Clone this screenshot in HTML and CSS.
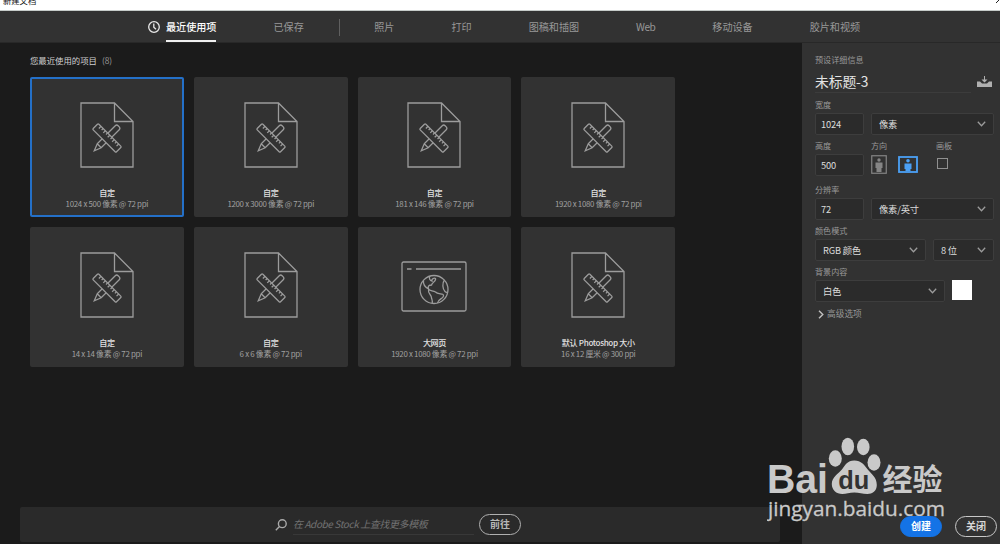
FILE: index.html
```html
<!DOCTYPE html>
<html lang="zh-CN">
<head>
    <meta charset="UTF-8">
    <meta name="viewport" content="width=device-width, initial-scale=1.0">
    <title>新建文档</title>
    <link rel="stylesheet" href="styles.css">
</head>
<body>
    <!-- Shared icons -->
    <svg class="defs">
        <symbol id="icon-doc" viewBox="0 0 54 66">
            <path d="M1 1H34.500L53 19.500V65H1Z M34.500 1V19.500H53"/>
            <g transform="translate(27 36) rotate(-45)">
                <path d="M-11 -2.800H14.500Q16.500 -2.800 16.500 -.8V.8Q16.500 2.800 14.500 2.800H-11L-18 0ZM-11 -2.800V2.800"/>
            </g>
            <g transform="translate(27 36) rotate(45)">
                <rect class="ruler" x="-16.500" y="-4" width="33" height="8" rx="1"/>
                <path d="M-12.500 -4V-1M-9.400 -4V-1.800M-6.300 -4V-1M-3.200 -4V-1.800M0 -4V-1M3.200 -4V-1.800M6.300 -4V-1M9.400 -4V-1.800M12.500 -4V-1"/>
            </g>
        </symbol>
        <symbol id="icon-web" viewBox="0 0 66 51">
            <rect x="1" y="1" width="64" height="49" rx="1.500"/>
            <path d="M6 8H10.500M15 8H60"/>
            <circle cx="33" cy="28.500" r="14"/>
            <path d="M22.500 19.500C22 23 24 26 27.500 28C26.500 25 28 24 30.500 24C31 21.500 35.500 20 34.500 17.500C33.500 16.500 30 18 31 20C29 20 27.500 17 29 15.200M27.500 28C28 30 32 29.500 34.500 31C37 34 43 31.500 42.500 35C42 38 37 38 36.500 42M27.500 28C26.500 33 31 34 30.500 37C31 39 32 40 31 42.300M43.500 19C41 22 41.500 28 44 30.500C45 31.500 46 31.500 46.700 31"/>
        </symbol>
        <symbol id="icon-chevron" viewBox="0 0 9 6">
            <path d="M.8 .8L4.500 4.700L8.200 .8"/>
        </symbol>
    </svg>

    <div class="titlebar">
        <span class="titlebar-text">新建文档</span>
        <svg class="titlebar-close" viewBox="0 0 8 8"><path d="M0 0L8 8M8 0L0 8"/></svg>
    </div>

    <nav class="tabs">
        <div class="tab active">
            <svg class="clock" viewBox="0 0 12 12"><circle cx="6" cy="6" r="5.300"/><path d="M5.800 2.500V6.200L8 8.300"/></svg>
            <span>最近使用项</span>
        </div>
        <div class="tab">已保存</div>
        <div class="tab-divider"></div>
        <div class="tab">照片</div>
        <div class="tab">打印</div>
        <div class="tab">图稿和插图</div>
        <div class="tab tab-web">Web</div>
        <div class="tab">移动设备</div>
        <div class="tab">胶片和视频</div>
    </nav>

    <div class="content">
        <main class="main">
            <h2 class="section-title">您最近使用的项目 <span>(8)</span></h2>
            <div class="cards">
                <div class="card selected">
                    <svg class="doc"><use href="#icon-doc"/></svg>
                    <div class="card-name">自定</div>
                    <div class="card-size">1024 x 500 像素 @ 72 ppi</div>
                </div>
                <div class="card">
                    <svg class="doc"><use href="#icon-doc"/></svg>
                    <div class="card-name">自定</div>
                    <div class="card-size">1200 x 3000 像素 @ 72 ppi</div>
                </div>
                <div class="card">
                    <svg class="doc"><use href="#icon-doc"/></svg>
                    <div class="card-name">自定</div>
                    <div class="card-size">181 x 146 像素 @ 72 ppi</div>
                </div>
                <div class="card">
                    <svg class="doc"><use href="#icon-doc"/></svg>
                    <div class="card-name">自定</div>
                    <div class="card-size">1920 x 1080 像素 @ 72 ppi</div>
                </div>
                <div class="card">
                    <svg class="doc"><use href="#icon-doc"/></svg>
                    <div class="card-name">自定</div>
                    <div class="card-size">14 x 14 像素 @ 72 ppi</div>
                </div>
                <div class="card">
                    <svg class="doc"><use href="#icon-doc"/></svg>
                    <div class="card-name">自定</div>
                    <div class="card-size">6 x 6 像素 @ 72 ppi</div>
                </div>
                <div class="card">
                    <svg class="web"><use href="#icon-web"/></svg>
                    <div class="card-name">大网页</div>
                    <div class="card-size">1920 x 1080 像素 @ 72 ppi</div>
                </div>
                <div class="card">
                    <svg class="doc"><use href="#icon-doc"/></svg>
                    <div class="card-name">默认 Photoshop 大小</div>
                    <div class="card-size">16 x 12 厘米 @ 300 ppi</div>
                </div>
            </div>

            <div class="search">
                <svg class="search-icon" viewBox="0 0 12 12"><circle cx="7.300" cy="4.700" r="3.900"/><path d="M4.500 7.500L.8 11.200"/></svg>
                <div class="search-field">在 Adobe Stock 上查找更多模板</div>
                <div class="btn btn-go">前往</div>
            </div>
        </main>

        <aside class="details">
            <div class="label">预设详细信息</div>
            <div class="name-row">
                <div class="doc-name">未标题-3</div>
                <svg class="save" viewBox="0 0 15 11"><path d="M0 5.500H3L5 7.500H10L12 5.500H15V11H0Z"/><path d="M7 0H8V3.500H10.500L7.500 6.500L4.500 3.500H7Z"/></svg>
            </div>

            <div class="label">宽度</div>
            <div class="row">
                <div class="input">1024</div>
                <div class="select">像素<svg class="chevron"><use href="#icon-chevron"/></svg></div>
            </div>

            <div class="label label-row"><span>高度</span><span>方向</span><span>画板</span></div>
            <div class="row">
                <div class="input">500</div>
                <div class="orientation">
                    <svg class="portrait" viewBox="0 0 16 19"><rect x=".75" y=".75" width="14.500" height="17.500"/><circle cx="8" cy="5" r="1.700"/><path d="M4.500 7.500H11.500V13H10.500V17H5.500V13H4.500Z"/></svg>
                    <svg class="landscape" viewBox="0 0 20 17"><rect x="1" y="1" width="18" height="15"/><circle cx="10" cy="4.700" r="1.800"/><path d="M6.500 7.500H13.500V13H12.500V15H7.500V13H6.500Z"/></svg>
                    <div class="checkbox"></div>
                </div>
            </div>

            <div class="label label-res">分辨率</div>
            <div class="row">
                <div class="input">72</div>
                <div class="select">像素/英寸<svg class="chevron"><use href="#icon-chevron"/></svg></div>
            </div>

            <div class="label">颜色模式</div>
            <div class="row">
                <div class="select select-mode">RGB 颜色<svg class="chevron"><use href="#icon-chevron"/></svg></div>
                <div class="select">8 位<svg class="chevron"><use href="#icon-chevron"/></svg></div>
            </div>

            <div class="label">背景内容</div>
            <div class="row">
                <div class="select select-bg">白色<svg class="chevron"><use href="#icon-chevron"/></svg></div>
                <div class="swatch"></div>
            </div>

            <div class="advanced">
                <svg viewBox="0 0 6 9"><path d="M1 .8L4.800 4.500L1 8.200"/></svg>
                <span>高级选项</span>
            </div>

            <div class="actions">
                <div class="btn btn-create">创建</div>
                <div class="btn btn-close">关闭</div>
            </div>
        </aside>
    </div>

    <!-- Site watermark -->
    <svg class="watermark" viewBox="0 0 184 92">
        <text class="wm-bold" x="0" y="61" font-size="41" textLength="61" lengthAdjust="spacingAndGlyphs">Bai</text>
        <g transform="translate(-1.700 0)">
            <ellipse cx="70" cy="26.500" rx="6.500" ry="8.300"/>
            <ellipse cx="82.500" cy="14.500" rx="6.300" ry="8.700"/>
            <ellipse cx="98" cy="15" rx="6.300" ry="8.300"/>
            <ellipse cx="108.700" cy="30.500" rx="6.500" ry="8.300"/>
            <path d="M89 28.500C96 28.500 99 33 102 37C106 42 111.500 45 111.500 53C111.500 59 107 62 102 62C97 62 94 60.500 89 60.500C84 60.500 81 62 77 62C71 62 66.500 58 66.500 52C66.500 45 73 42 77 37C80 33 82 28.500 89 28.500Z"/>
            <text class="wm-bold wm-du" x="73" y="57" font-size="25" textLength="31" lengthAdjust="spacingAndGlyphs">du</text>
        </g>
        <text class="wm-cjk" x="115.500" y="57.500" font-size="30" textLength="60">经验</text>
        <text class="wm-url" x="1" y="84" font-size="20.500" textLength="177" lengthAdjust="spacingAndGlyphs">jingyan.baidu.com</text>
    </svg>
</body>
</html>
```
FILE: styles.css
```css
* {
    box-sizing: border-box;
}
body {
    margin: 0;
    width: 1000px;
    height: 544px;
    overflow: hidden;
    display: flex;
    flex-direction: column;
    position: relative;
    background-color: #1b1b1b;
    color: #d6d6d6;
    font-family: "Noto Sans CJK SC", sans-serif;
    font-size: 10px;
}
svg {
    display: block;
    fill: none;
    stroke: #9c9c9c;
    flex-shrink: 0;
}
.defs {
    position: absolute;
    width: 0;
    height: 0;
}

/* Window title */
.titlebar {
    height: 11px;
    flex-shrink: 0;
    display: flex;
    justify-content: space-between;
    background-color: #fff;
    border-bottom: 1px solid #c6cbc9;
    overflow: hidden;
}
.titlebar-text {
    margin: -6px 0 0 3px;
    font-size: 8.3px;
    line-height: 12px;
    color: #111;
}
.titlebar-close {
    width: 8px;
    height: 8px;
    margin: -5px -4px 0 0;
    stroke: #222;
}

/* Category tabs */
.tabs {
    height: 32px;
    flex-shrink: 0;
    display: flex;
    gap: 57px;
    padding-left: 148px;
    background-color: #323232;
    border-bottom: 1px solid #282828;
    font-size: 10.1px;
    line-height: 31px;
    color: #989898;
    white-space: nowrap;
}
.tab.active {
    display: flex;
    align-items: center;
    gap: 6px;
    color: #fff;
    font-weight: 500;
}
.tab.active span {
    height: 31px;
    border-bottom: 2px solid #f0f0f0;
}
.tab-web {
    letter-spacing: -0.5px;
}
.clock {
    width: 12px;
    height: 12px;
    stroke: #e8e8e8;
    stroke-width: 1.3;
}
.tab-divider {
    width: 1px;
    height: 17px;
    margin: 8px -22.500px 0 -22px;
    background-color: #606060;
}

.content {
    flex: 1;
    display: flex;
    min-height: 0;
}
.main {
    width: 802px;
    display: flex;
    flex-direction: column;
    padding: 11px 22px 2px 20px;
}
.section-title {
    margin: 0 0 10px 10px;
    font-size: 8.4px;
    line-height: 13px;
    font-weight: 400;
    color: #d0d0d0;
}
.section-title span {
    margin-left: 3px;
    color: #999;
}

/* Preset cards */
.cards {
    display: grid;
    grid-template-columns: repeat(4, 153.800px);
    grid-auto-rows: 140px;
    gap: 10px;
    margin-left: 10px;
}
.card {
    display: flex;
    flex-direction: column;
    align-items: center;
    padding-top: 25px;
    background-color: #323232;
    border-radius: 2px;
    text-align: center;
    white-space: nowrap;
}
.card.selected {
    padding-top: 23px;
    border: 2px solid #2470c8;
}
.doc {
    width: 54px;
    height: 66px;
    margin-bottom: 19px;
    stroke-width: 1.3;
}
.web {
    width: 66px;
    height: 51px;
    margin: 9px 0 25px;
    stroke-width: 1.3;
}
.ruler {
    fill: #323232;
}
.card-name {
    font-size: 8.1px;
    line-height: 12px;
    letter-spacing: -0.35px;
    font-weight: 500;
    color: #e0e0e0;
}
.card-size {
    margin-top: -1px;
    font-size: 7.9px;
    line-height: 11px;
    letter-spacing: -0.3px;
    color: #a0a0a0;
}

/* Stock search */
.search {
    height: 35px;
    margin-top: auto;
    display: flex;
    align-items: center;
    padding-left: 255px;
    background-color: #2a2a2a;
    border-radius: 2px;
    width: 760px;
}
.search-icon {
    width: 12px;
    height: 12px;
    stroke: #aaa;
    stroke-width: 1.4;
}
.search-field {
    width: 181px;
    height: 20px;
    margin: 0 5px 0 6px;
    border-bottom: 1px solid #383838;
    font-size: 10px;
    line-height: 18px;
    letter-spacing: -0.4px;
    font-style: italic;
    color: #727272;
}
.btn {
    height: 21px;
    border: 1.5px solid #b0b0b0;
    border-radius: 11px;
    font-weight: 700;
    font-size: 10px;
    line-height: 18px;
    text-align: center;
}
.btn-go {
    width: 42px;
    color: #b8b8b8;
}

/* Preset details */
.details {
    flex: 1;
    display: flex;
    flex-direction: column;
    padding: 10px 6px 7px 13px;
    background-color: #323232;
}
.label {
    height: 13px;
    font-size: 8.1px;
    line-height: 13px;
    color: #999;
}
.name-row {
    display: flex;
    justify-content: space-between;
    align-items: center;
    height: 27px;
    margin-bottom: 5px;
    padding-right: 2px;
}
.doc-name {
    width: 156px;
    height: 27px;
    font-size: 13.8px;
    line-height: 30px;
    letter-spacing: -0.1px;
    color: #e4e4e4;
    border-bottom: 1px solid #3c3c3c;
}
.save {
    width: 15px;
    height: 11px;
    margin-top: 4px;
    fill: #b0b0b0;
    stroke: none;
}
.row {
    display: flex;
    gap: 7px;
    height: 22px;
    margin: 2px 0 4px;
}
.input,
.select {
    height: 22px;
    border: 1px solid #3d3d3d;
    border-radius: 2px;
    background-color: #2b2b2b;
    font-size: 9.3px;
    line-height: 20px;
    letter-spacing: -0.2px;
    color: #dcdcdc;
}
.input {
    width: 49px;
    padding-left: 5px;
}
.select {
    flex: 1;
    display: flex;
    align-items: center;
    justify-content: space-between;
    padding: 0 7px;
}
.chevron {
    width: 9px;
    height: 6px;
    stroke-width: 1.3;
}
.select-mode {
    flex: 0 0 111px;
}
.select-bg {
    flex: 0 0 130px;
}
.label-row {
    display: grid;
    grid-template-columns: 56px 65px auto;
}
.orientation {
    display: flex;
    align-items: center;
    height: 20px;
}
.portrait {
    width: 16px;
    height: 19px;
    margin: 0 11px 0 0;
    stroke: #858585;
    stroke-width: 1.2;
}
.portrait circle,
.portrait path {
    fill: #858585;
    stroke: none;
}
.landscape {
    width: 20px;
    height: 17px;
    margin-right: 19px;
    stroke: #4ba0f5;
    stroke-width: 1.8;
}
.landscape circle,
.landscape path {
    fill: #4ba0f5;
    stroke: none;
}
.checkbox {
    width: 11px;
    height: 11px;
    margin-bottom: 1px;
    border: 1px solid #909090;
}
.label-res {
    margin-top: 3px;
}
.swatch {
    width: 20px;
    height: 20px;
    background-color: #fff;
}
.advanced {
    display: flex;
    align-items: center;
    gap: 3px;
    margin: 1px 0 0 3px;
    font-size: 8.700px;
    line-height: 14px;
    color: #999;
}
.advanced svg {
    width: 6px;
    height: 9px;
    stroke: #c0c0c0;
    stroke-width: 1.4;
}
.actions {
    display: flex;
    justify-content: flex-end;
    gap: 13px;
    margin-top: auto;
    margin-right: -3px;
    position: relative;
    z-index: 2;
}
.btn-create {
    width: 42px;
    background-color: #1473e6;
    border-color: #1473e6;
    color: #fff;
}
.btn-close {
    width: 42px;
    color: #d8d8d8;
    border-color: #c8c8c8;
}

/* Watermark */
.watermark {
    position: absolute;
    left: 767px;
    top: 432px;
    width: 184px;
    height: 92px;
    fill: #c9c9c9;
    stroke: none;
    z-index: 1;
}
.wm-bold {
    font-family: "Liberation Sans", Arial, sans-serif;
    font-weight: 700;
}
.wm-du {
    fill: #323232;
}
.wm-cjk {
    font-weight: 700;
}
.wm-url {
    font-family: "Open Sans", "Noto Sans", sans-serif;
    stroke: #c9c9c9;
    stroke-width: 0.3;
}
```
